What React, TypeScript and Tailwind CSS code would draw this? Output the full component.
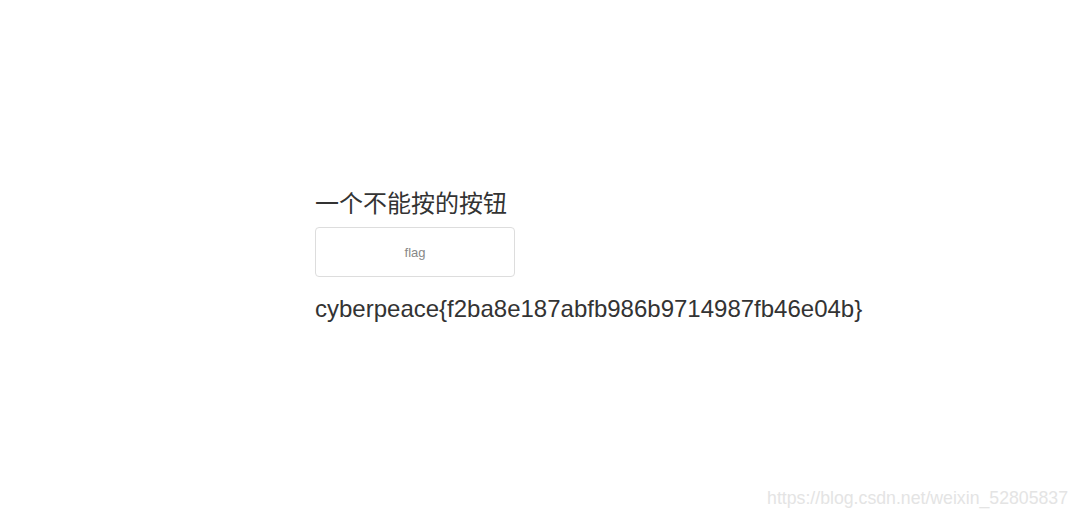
import React from "react";

const App: React.FC = () => {
  return (
    <div className="relative h-[517px] w-full bg-white font-['Liberation_Sans','Noto_Sans_CJK_SC',sans-serif] text-[#333]">
      <div className="flex flex-col pl-[315px] pt-[188px]">
        <h3 className="text-[24px] leading-[32px]">一个不能按的按钮</h3>
        <button className="mt-[7px] h-[50px] w-[200px] rounded-[4px] border border-[#ddd] bg-white pt-[1px] text-[13px] text-[#888]">
          flag
        </button>
        <p className="mt-[16px] text-[24px] leading-[32px]">
          cyberpeace{"{"}f2ba8e187abfb986b9714987fb46e04b{"}"}
        </p>
      </div>
      <span className="absolute bottom-[8px] right-[9px] text-[17.7px] leading-[22px] text-[#e4e4e4]">
        https://blog.csdn.net/weixin_52805837
      </span>
    </div>
  );
};

export default App;
